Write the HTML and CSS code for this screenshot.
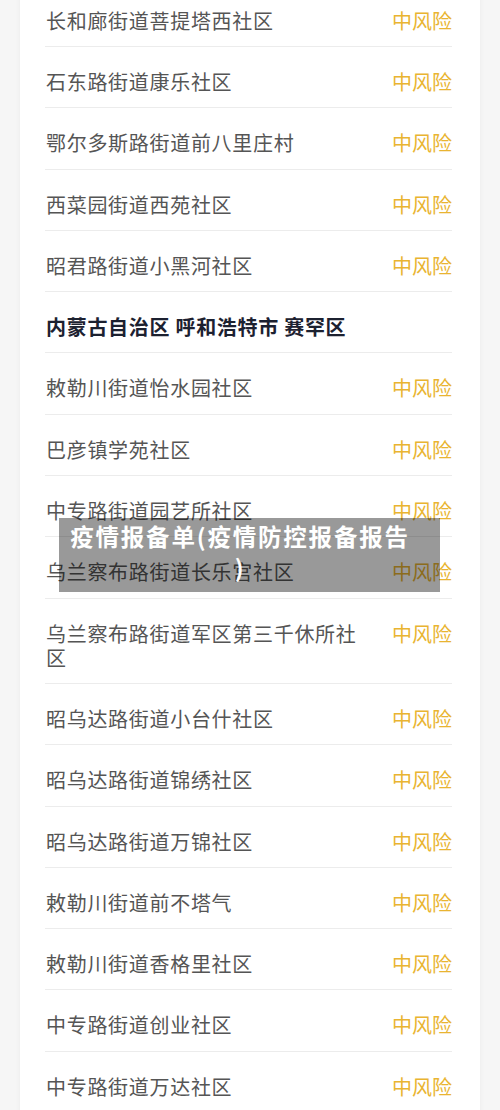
FILE: index.html
```html
<!DOCTYPE html>
<html lang="zh-CN">
<head>
    <meta charset="UTF-8">
    <meta name="viewport" content="width=device-width, initial-scale=1.0">
    <title>疫情报备单</title>
    <link rel="stylesheet" href="styles.css">
</head>
<body>
    <div class="card">
        <div class="row"><span class="name">长和廊街道菩提塔西社区</span><span class="level">中风险</span></div>
        <div class="row"><span class="name">石东路街道康乐社区</span><span class="level">中风险</span></div>
        <div class="row"><span class="name">鄂尔多斯路街道前八里庄村</span><span class="level">中风险</span></div>
        <div class="row"><span class="name">西菜园街道西苑社区</span><span class="level">中风险</span></div>
        <div class="row"><span class="name">昭君路街道小黑河社区</span><span class="level">中风险</span></div>
        <div class="row region">内蒙古自治区 呼和浩特市 赛罕区</div>
        <div class="row"><span class="name">敕勒川街道怡水园社区</span><span class="level">中风险</span></div>
        <div class="row"><span class="name">巴彦镇学苑社区</span><span class="level">中风险</span></div>
        <div class="row"><span class="name">中专路街道园艺所社区</span><span class="level">中风险</span></div>
        <div class="row"><span class="name">乌兰察布路街道长乐宫社区</span><span class="level">中风险</span></div>
        <div class="row"><span class="name">乌兰察布路街道军区第三千休所社区</span><span class="level">中风险</span></div>
        <div class="row"><span class="name">昭乌达路街道小台什社区</span><span class="level">中风险</span></div>
        <div class="row"><span class="name">昭乌达路街道锦绣社区</span><span class="level">中风险</span></div>
        <div class="row"><span class="name">昭乌达路街道万锦社区</span><span class="level">中风险</span></div>
        <div class="row"><span class="name">敕勒川街道前不塔气</span><span class="level">中风险</span></div>
        <div class="row"><span class="name">敕勒川街道香格里社区</span><span class="level">中风险</span></div>
        <div class="row"><span class="name">中专路街道创业社区</span><span class="level">中风险</span></div>
        <div class="row"><span class="name">中专路街道万达社区</span><span class="level">中风险</span></div>
    </div>

    <div class="caption">疫情报备单(疫情防控报备报告)</div>
</body>
</html>
```

FILE: styles.css
```css
body {
    margin: 0;
    position: relative;
    background: #f6f6f6;
    font-family: "Noto Sans CJK SC", "Noto Sans", sans-serif;
}

.card {
    margin: -14.3px 20px 0;
    padding: 0 28px 0 25px;
    background: #fff;
    box-shadow: 0 0 5px rgba(0, 0, 0, 0.05);
}

.row {
    display: flex;
    align-items: flex-start;
    gap: 20px;
    padding: 23px 0 13.3px 1px;
    border-bottom: 1px solid #ececec;
    font-size: 20px;
    line-height: 24px;
    letter-spacing: 0.7px;
}

.name {
    flex: 1;
    color: #555;
}

.level {
    color: #e9b431;
    letter-spacing: 0;
}

.region {
    color: #1c2130;
    font-weight: bold;
}

.caption {
    position: absolute;
    top: 518px;
    left: 59px;
    width: 340px;
    padding: 3px 30px 9px 11px;
    background: rgba(0, 0, 0, 0.4);
    color: #fff;
    font-size: 23.5px;
    font-weight: bold;
    line-height: 31px;
    letter-spacing: 1.8px;
    line-break: anywhere;
    text-align: center;
}
```
